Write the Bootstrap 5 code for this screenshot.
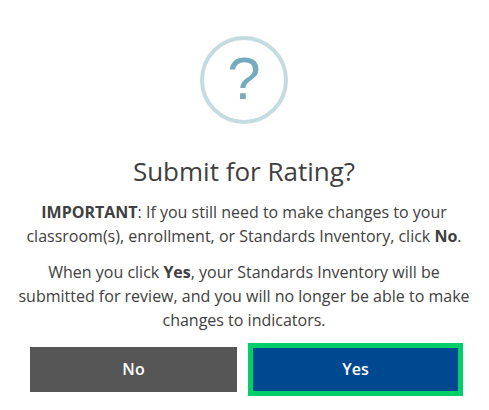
<!DOCTYPE html>
<html lang="en">
<head>
<meta charset="utf-8">
<meta name="viewport" content="width=device-width, initial-scale=1">
<title>Submit for Rating?</title>
<link href="https://cdn.jsdelivr.net/npm/bootstrap@5.3.0/dist/css/bootstrap.min.css" rel="stylesheet">
<style>
body { font-family: "Open Sans", sans-serif; font-size: 16px; line-height: 24px; color: #404040; }
.dialog { padding: 36px 12px 12px 11px; }
.question-icon { width: 88px; height: 88px; border: 4px solid #c4dbe2; color: #76abbd; font-family: "Liberation Sans", Arial, sans-serif; font-size: 60px; line-height: 78px; }
.dialog-title { font-size: 26px; line-height: 40px; margin: 27px 0 9px; font-weight: 400; }
.dialog-text p { margin-bottom: 12px; }
.dialog-actions { gap: 15px; padding: 3px 18px 0 19px; }
.dialog-actions .btn { height: 45px; padding: 10px 12px 11px; line-height: 24px; color: #fff; font-weight: 600; --bs-btn-hover-color: #fff; }
.btn-no { background: #555; }
.btn-yes { background: #00488f; outline: 5px solid #00cf69; outline-offset: -1px; }
</style>
</head>
<body class="bg-white">
<main class="dialog text-center" role="dialog" aria-labelledby="title">
  <div class="question-icon rounded-circle mx-auto" aria-hidden="true">?</div>
  <h1 class="dialog-title" id="title">Submit for Rating?</h1>
  <div class="dialog-text">
    <p><strong>IMPORTANT</strong>: If you still need to make changes to your classroom(s), enrollment, or Standards Inventory, click <strong>No</strong>.</p>
    <p>When you click <strong>Yes</strong>, your Standards Inventory will be submitted for review, and you will no longer be able to make changes to indicators.</p>
  </div>
  <div class="dialog-actions d-flex">
    <button type="button" class="btn btn-no flex-fill w-50 rounded-0 border-0">No</button>
    <button type="button" class="btn btn-yes flex-fill w-50 rounded-0 border-0">Yes</button>
  </div>
</main>
<script src="https://cdn.jsdelivr.net/npm/bootstrap@5.3.0/dist/js/bootstrap.bundle.min.js"></script>
</body>
</html>
